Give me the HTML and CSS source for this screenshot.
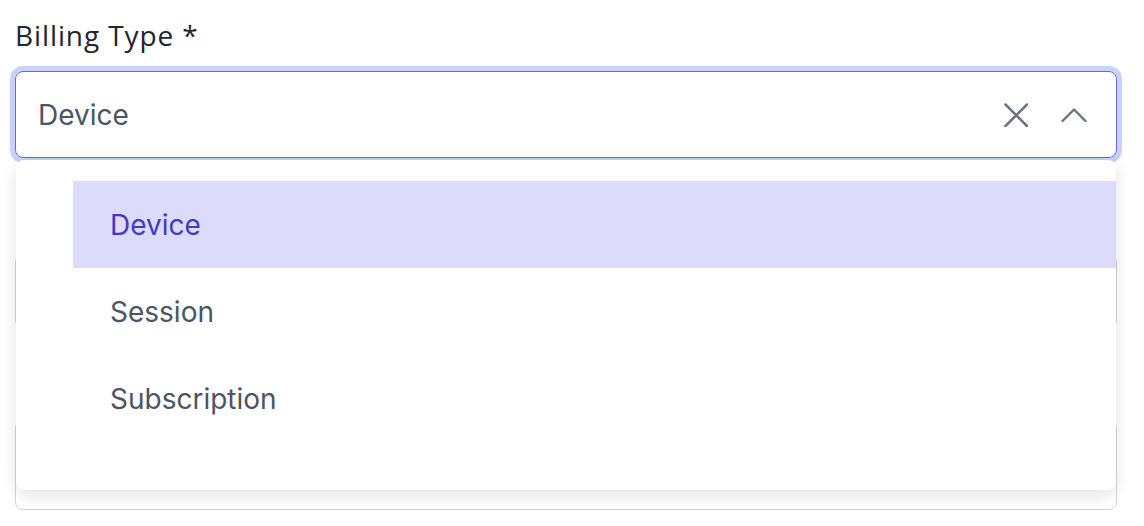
FILE: index.html
```html
<!DOCTYPE html>
<html lang="en">
<head>
<meta charset="utf-8">
<title>Billing Type</title>
<link rel="stylesheet" href="styles.css">
</head>
<body>
<div class="form">
  <label class="label">Billing Type *</label>
  <div class="select-wrap">
    <div class="select">
      <span class="value">Device</span>
      <span class="icons">
        <svg class="icon" width="24" height="24" viewBox="0 0 24 24" fill="none" stroke="currentColor" stroke-width="2.5" stroke-linecap="round"><path d="M1.5 1.5L23 23M23 1.5L1.5 23"/></svg>
        <svg class="icon chev" width="26" height="16" viewBox="0 0 26 16" fill="none" stroke="currentColor" stroke-width="2.4" stroke-linecap="round" stroke-linejoin="round"><path d="M1.5 14L13 2.5L24.5 14"/></svg>
      </span>
    </div>
    <ul class="menu">
      <li class="option active">Device</li>
      <li class="option">Session</li>
      <li class="option">Subscription</li>
    </ul>
  </div>
  <div class="field field-a"></div>
  <div class="field field-b"></div>
</div>
</body>
</html>
```
FILE: styles.css
```css
html, body {
  margin: 0;
  background: #ffffff;
}
.form {
  padding: 0 27px 0 15px;
  font-family: Inter, "Liberation Sans", sans-serif;
}
.label {
  display: block;
  font-family: "Open Sans", Lato, sans-serif;
  font-size: 28px;
  letter-spacing: 0.9px;
  line-height: 36px;
  padding-top: 17px;
  color: #23262b;
  margin-bottom: 18px;
}
.select-wrap {
  position: relative;
}
.select {
  box-sizing: border-box;
  height: 87px;
  border: 1px solid #6366f1;
  border-radius: 8px;
  box-shadow: 0 0 0 5px #c7d2fe;
  display: flex;
  align-items: center;
  justify-content: space-between;
  padding: 0 29px 0 22px;
}
.value {
  font-size: 28px;
  color: #4b5563;
}
.icons {
  display: flex;
  align-items: center;
  gap: 33px;
  color: #6b7280;
}
.icon {
  display: block;
}
.menu {
  position: absolute;
  top: 89px;
  left: 1px;
  right: 1px;
  height: 330px;
  box-sizing: border-box;
  margin: 0;
  padding: 21px 0 0 57px;
  list-style: none;
  background: #ffffff;
  border-radius: 8px;
  box-shadow: 0 0 18px rgba(0, 0, 0, 0.07), 0 10px 16px rgba(0, 0, 0, 0.05);
  z-index: 2;
}
.option {
  height: 87px;
  display: flex;
  align-items: center;
  padding-left: 37px;
  font-size: 28px;
  color: #4b5563;
}
.option.active {
  background: #dcdbfb;
  color: #4338ca;
}
.field {
  box-sizing: border-box;
  border: 1px solid #d1d5db;
  border-radius: 8px;
}
.field-a {
  margin-top: 96px;
  height: 74px;
}
.field-b {
  margin-top: 92px;
  height: 90px;
}
```
